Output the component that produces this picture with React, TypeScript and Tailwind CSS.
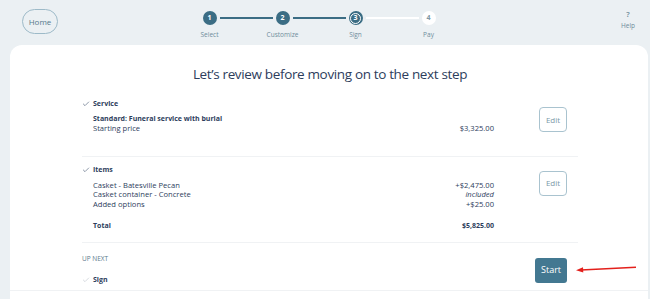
import { Check } from "lucide-react";

const steps = [
  { n: 1, label: "Select", state: "done" },
  { n: 2, label: "Customize", state: "done" },
  { n: 3, label: "Sign", state: "current" },
  { n: 4, label: "Pay", state: "todo" },
];

const Circle = ({ n, state }: { n: number; state: string }) => {
  if (state === "current") {
    return (
      <div className="w-[14px] h-[14px] rounded-full bg-[#3b6d84] flex items-center justify-center">
        <div className="w-[11px] h-[11px] rounded-full border border-white bg-[#3b6d84] flex items-center justify-center text-[7px] font-bold text-white">
          {n}
        </div>
      </div>
    );
  }
  if (state === "todo") {
    return (
      <div className="w-[14px] h-[14px] rounded-full bg-white flex items-center justify-center text-[7px] font-bold text-[#7f97a5]">
        {n}
      </div>
    );
  }
  return (
    <div className="w-[14px] h-[14px] rounded-full bg-[#3b6d84] flex items-center justify-center text-[7px] font-bold text-white">
      {n}
    </div>
  );
};

const Stepper = () => {
  return (
    <div className="w-[292px] ml-[115px] pt-[11px]">
      <div className="flex items-center justify-center">
        {steps.map((s, i) => (
          <div key={s.n} className="flex items-center">
            <Circle n={s.n} state={s.state} />
            {i < steps.length - 1 && (
              <div
                className={`w-[53px] h-[2px] mx-[3px] ${
                  i < 2 ? "bg-[#3b6d84]" : "bg-white"
                }`}
              />
            )}
          </div>
        ))}
      </div>
      <div className="grid grid-cols-4 mt-[6px]">
        {steps.map((s) => (
          <div key={s.n} className="text-center text-[6.5px] leading-[8px] text-[#6f8d9c]">
            {s.label}
          </div>
        ))}
      </div>
    </div>
  );
};

const EditButton = () => (
  <button className="w-[28px] h-[25px] rounded-[4px] border border-[#a9c3cf] bg-white text-[8px] text-[#7b98a8]">
    Edit
  </button>
);

const Row = ({ left, right, bold, italic }: any) => (
  <div className={`flex justify-between leading-[9.5px] ${bold ? "font-bold text-[7px]" : ""}`}>
    <span>{left}</span>
    <span className={italic ? "italic" : ""}>{right}</span>
  </div>
);

export default function App() {
  return (
    <div
      className="w-[650px] h-[299px] bg-[#ebf0f3] overflow-hidden flex flex-col"
      style={{ fontFamily: "'Open Sans', 'Liberation Sans', sans-serif" }}
    >
      <div className="h-[45px] flex shrink-0">
        <div className="pl-[22px] pt-[9px]">
          <div className="w-[36px] h-[25px] rounded-full border border-[#9dbac8] flex items-center justify-center text-[8px] text-[#55798b]">
            Home
          </div>
        </div>
        <Stepper />
        <div className="ml-auto mr-[10px] pt-[9px] flex flex-col items-center text-[6.5px] leading-[11px] text-[#6f8d9c] w-[24px]">
          <span className="text-[7.5px] font-semibold">?</span>
          <span>Help</span>
        </div>
      </div>

      <div className="flex-1 ml-[10px] mr-[2px] bg-white rounded-t-[12px] flex flex-col">
        <div className="w-[496px] ml-[72px] text-[#2d3d5c] text-[7.6px]">
          <h1 className="mt-[19px] text-center text-[13.5px] tracking-[-0.35px] leading-[20px] text-[#2d3d5c]">
            Let’s review before moving on to the next step
          </h1>

          {/* service */}
          <div className="flex mt-[15px] pb-[22px] border-b border-[#f0f2f4]">
            <div className="w-[11px] pt-[1px]">
              <Check className="w-[8px] h-[8px] text-[#55657d]" strokeWidth={2} />
            </div>
            <div className="flex-1">
              <div className="font-bold text-[7px] leading-[10px]">Service</div>
              <div className="mt-[5px] font-bold text-[7px] leading-[10px]">
                Standard: Funeral service with burial
              </div>
              <Row left="Starting price" right="$3,325.00" />
            </div>
            <div className="w-[84px] flex justify-end pr-[11px] pt-[8px]">
              <EditButton />
            </div>
          </div>

          {/* items */}
          <div className="flex pt-[8px] pb-[11px] border-b border-[#f0f2f4]">
            <div className="w-[11px] pt-[1px]">
              <Check className="w-[8px] h-[8px] text-[#55657d]" strokeWidth={2} />
            </div>
            <div className="flex-1">
              <div className="font-bold text-[7px] leading-[10px]">Items</div>
              <div className="mt-[6px]">
                <Row left="Casket - Batesville Pecan" right="+$2,475.00" />
                <Row left="Casket container - Concrete" right="included" italic />
                <Row left="Added options" right="+$25.00" />
              </div>
              <div className="mt-[12px]">
                <Row left="Total" right="$5,825.00" bold />
              </div>
            </div>
            <div className="w-[84px] flex justify-end pr-[11px] pt-[6px]">
              <EditButton />
            </div>
          </div>

          {/* up next */}
          <div className="flex pt-[11px] h-[47px]">
            <div className="flex-1">
              <div className="text-[6.5px] leading-[10px] text-[#5e7a8c] uppercase">
                Up next
              </div>
              <div className="flex items-center mt-[11px]">
                <div className="w-[11px]">
                  <Check className="w-[8px] h-[8px] text-[#c2c9d0]" strokeWidth={2} />
                </div>
                <span className="text-[7px] font-bold leading-[10px]">Sign</span>
              </div>
            </div>
            <div className="w-[84px] flex justify-end pr-[11px] pt-[4px] relative">
              <button className="w-[32px] h-[25px] rounded-[3px] bg-[#437891] text-[9px] text-white">
                Start
              </button>
              <svg
                className="absolute left-[82px] top-[11px]"
                width="64"
                height="8"
                viewBox="0 0 64 8"
              >
                <line x1="5" y1="5" x2="60" y2="2.3" stroke="#e3201c" strokeWidth="1.5" />
                <polygon points="0,5.2 7,2.3 7.3,7.5" fill="#e3201c" />
              </svg>
            </div>
          </div>
        </div>
        <div className="border-t border-[#f0f2f4] flex-1" />
      </div>
    </div>
  );
}
